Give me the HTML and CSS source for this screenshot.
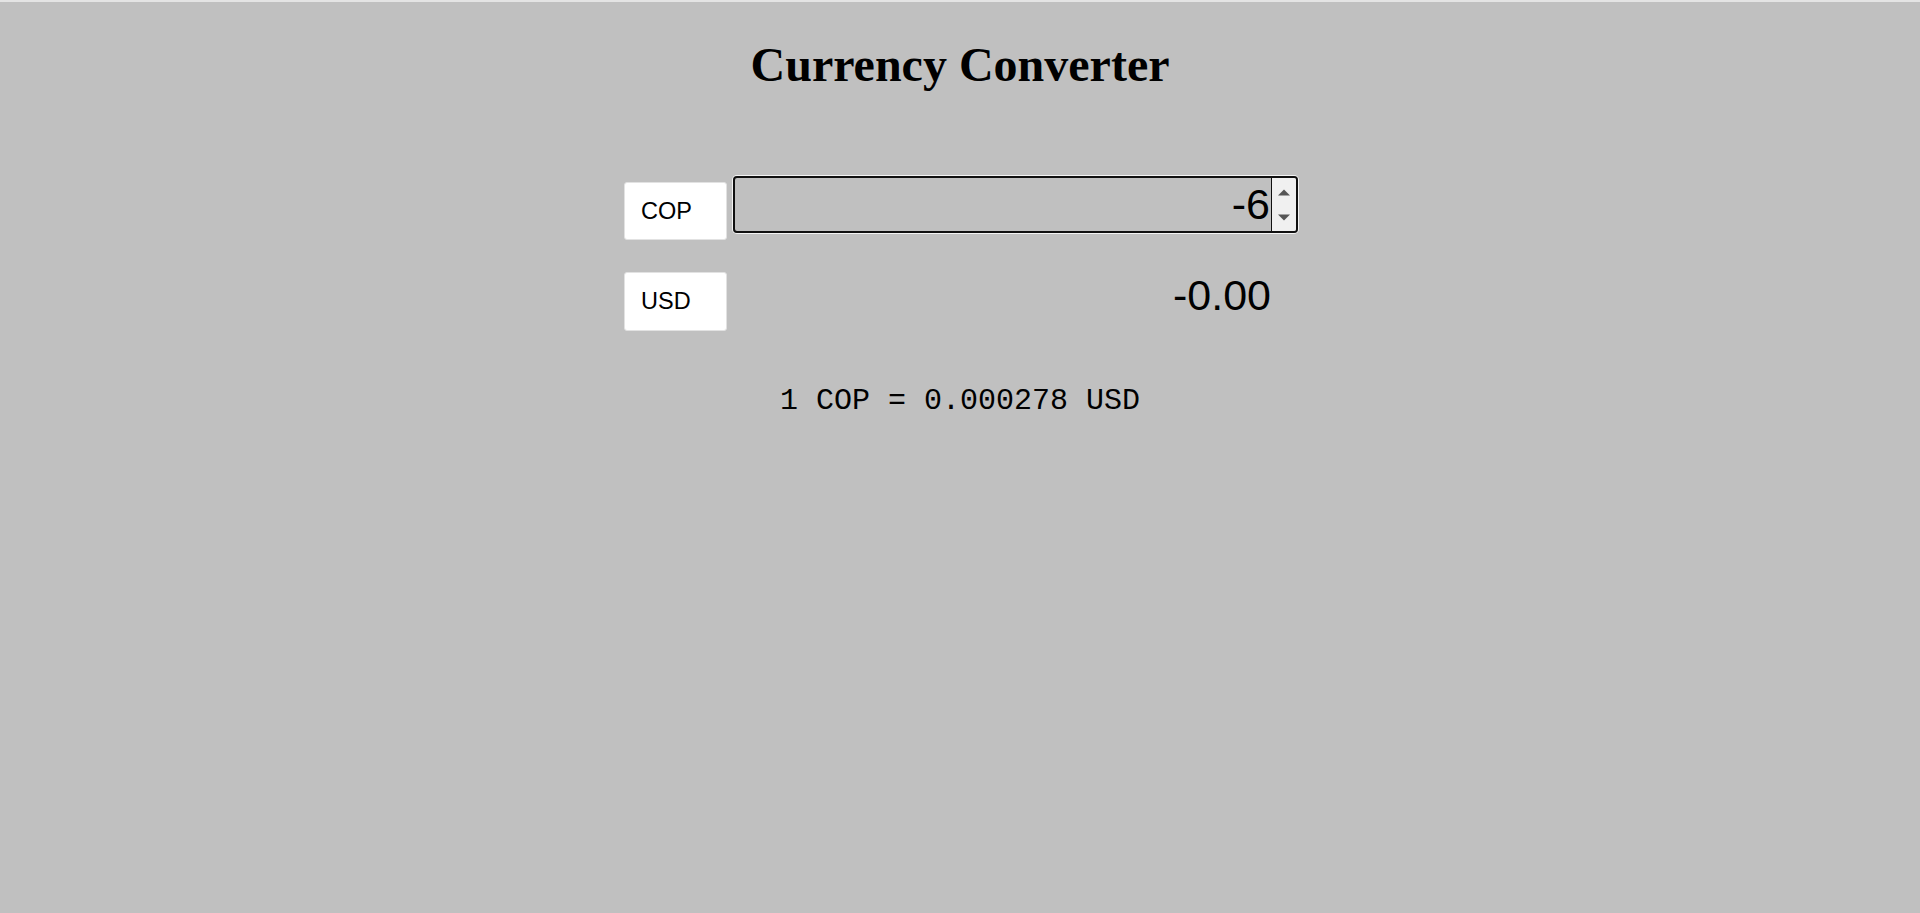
FILE: index.html
```html
<!DOCTYPE html>
<html lang="en">
<head>
<meta charset="utf-8">
<title>Currency Converter</title>
<link rel="stylesheet" href="styles.css">
</head>
<body>
<div class="topline"></div>
<h1 class="title">Currency Converter</h1>
<div class="converter">
  <div class="row row-from">
    <div class="currency">COP</div>
    <div class="input-wrap">
      <input class="amount" type="number" value="-6">
      <div class="spinner">
        <svg class="arrow" width="12" height="7" viewBox="0 0 12 7"><polygon points="0,6.5 6,0.5 12,6.5" fill="#555"/></svg>
        <svg class="arrow" width="12" height="7" viewBox="0 0 12 7"><polygon points="0,0.5 12,0.5 6,6.5" fill="#555"/></svg>
      </div>
    </div>
  </div>
  <div class="row row-to">
    <div class="currency currency-to">USD</div>
    <div class="result">-0.00</div>
  </div>
</div>
<div class="rate">1 COP = 0.000278 USD</div>
</body>
</html>
```

FILE: styles.css
```css
html, body {
  margin: 0;
  padding: 0;
  background: #c0c0c0;
  color: #000;
}

body {
  min-height: 913px;
}

.topline {
  height: 2px;
  background: #e4e4e4;
}

.title {
  margin: 35px 0 0;
  font-family: "Liberation Serif", "Times New Roman", serif;
  font-weight: 700;
  font-size: 48px;
  line-height: 56px;
  text-align: center;
}

.converter {
  box-sizing: border-box;
  width: 676px;
  padding-left: 2px;
  margin: 83px auto 0;
}

.row {
  display: flex;
  gap: 6px;
  align-items: flex-start;
}

.currency {
  box-sizing: border-box;
  width: 103px;
  height: 58px;
  margin-top: 6px;
  padding-left: 16px;
  display: flex;
  align-items: center;
  background: #fff;
  border: 1px solid #e2e2e2;
  border-radius: 3px;
  font-family: "Liberation Sans", Arial, sans-serif;
  font-size: 23.5px;
}

.currency-to {
  margin-top: 0;
  height: 59px;
}

.input-wrap {
  position: relative;
  width: 565px;
  height: 57px;
}

.amount {
  box-sizing: border-box;
  width: 100%;
  height: 100%;
  margin: 0;
  padding: 0 26px 0 0;
  border: 2px solid #101010;
  border-radius: 4px;
  box-shadow: 0 0 0 1px #f4f4f4;
  background: transparent;
  outline: none;
  color: #000;
  font-family: "Liberation Sans", Arial, sans-serif;
  font-size: 43px;
  text-align: right;
  -moz-appearance: textfield;
  appearance: textfield;
}

.amount::-webkit-inner-spin-button,
.amount::-webkit-outer-spin-button {
  -webkit-appearance: none;
  margin: 0;
}

.spinner {
  position: absolute;
  top: 2px;
  right: 2px;
  bottom: 2px;
  width: 25px;
  box-sizing: border-box;
  border-left: 1px solid #101010;
  background: #f0f0f0;
  border-radius: 0 2px 2px 0;
  display: flex;
  flex-direction: column;
  align-items: center;
  justify-content: space-between;
  padding: 11px 0 10px;
}

.arrow {
  display: block;
}

.row-to {
  margin-top: 32px;
}

.result {
  flex: 1;
  margin-top: -2px;
  padding-right: 27px;
  text-align: right;
  font-family: "Liberation Sans", Arial, sans-serif;
  font-size: 43px;
  line-height: 50px;
}

.rate {
  margin-top: 53px;
  text-align: center;
  font-family: "Liberation Mono", "Courier New", monospace;
  font-size: 30px;
  line-height: 34px;
}
```
